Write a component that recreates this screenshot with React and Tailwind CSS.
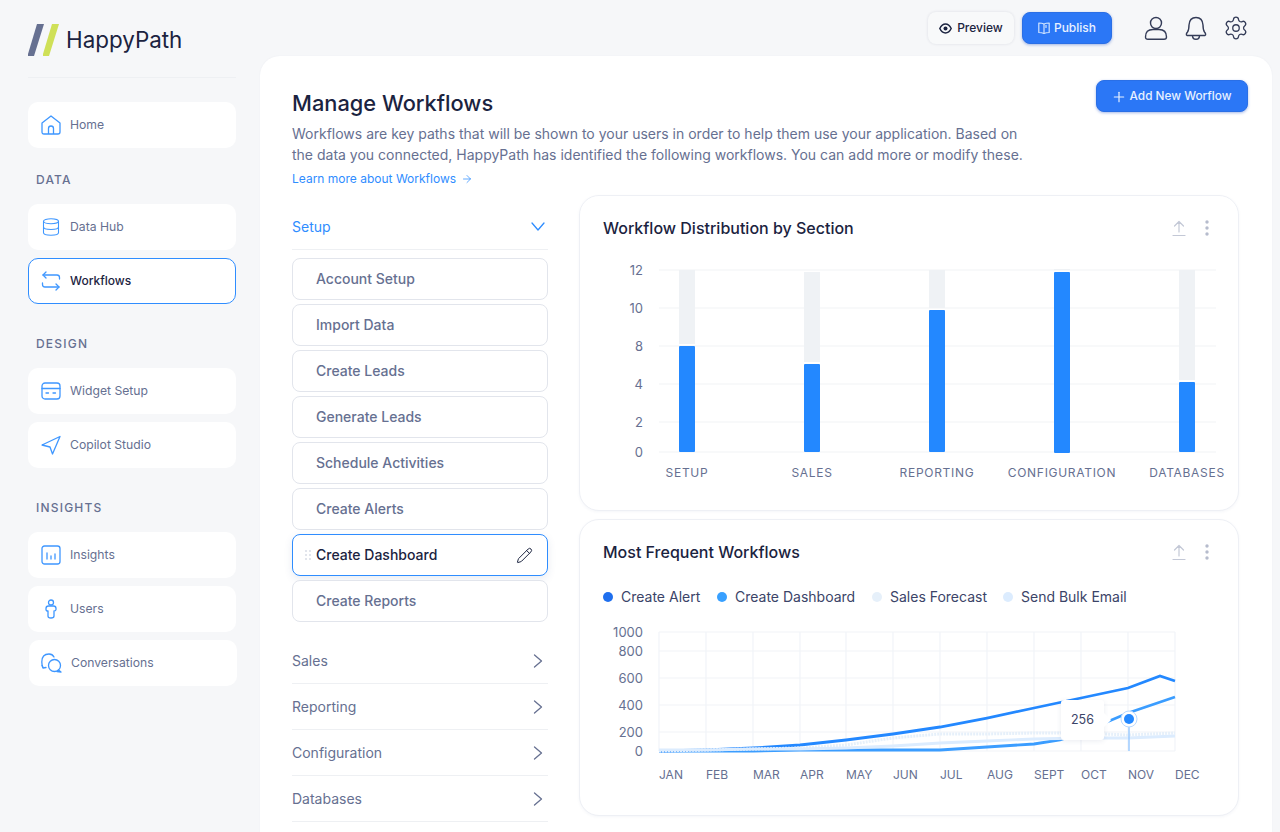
import React from 'react';
import { ArrowRight, Database, Pencil, Plus, Settings } from 'lucide-react';

const HomeIcon = () => (
  <svg width="20" height="20" viewBox="0 0 20 20" fill="none" stroke="#3f97ff" strokeWidth="1.3" strokeLinejoin="round">
    <path d="M1 8 L10 1 L19 8 V17 Q19 19 17 19 H3 Q1 19 1 17 Z" />
    <path d="M7.5 19 V13.5 Q7.5 11 10 11 Q12.5 11 12.5 13.5 V19" />
  </svg>
);

const FlowIcon = () => (
  <svg width="20" height="20" viewBox="0 0 20 20" fill="none" stroke="#3f97ff" strokeWidth="1.3" strokeLinecap="round" strokeLinejoin="round">
    <path d="M18.5 8 V6.5 Q18.5 4 16 4 H2" />
    <path d="M5 1 L2 4 L5 7" />
    <path d="M1.5 12 V13.5 Q1.5 16 4 16 H18" />
    <path d="M15 13 L18 16 L15 19" />
  </svg>
);

const CardIcon = () => (
  <svg width="20" height="18" viewBox="0 0 20 18" fill="none" stroke="#3f97ff" strokeWidth="1.3" strokeLinecap="round">
    <rect x="1" y="1" width="18" height="16" rx="3" />
    <path d="M1 6.5 H19" />
    <path d="M5 11 H7.5 M12 11 H14.5" />
  </svg>
);

const SendIcon = () => (
  <svg width="20" height="20" viewBox="0 0 20 20" fill="none" stroke="#3f97ff" strokeWidth="1.3" strokeLinejoin="round">
    <path d="M1 10 L19 1.5 L11.5 19 L9 12 Z" />
  </svg>
);

const ChartIcon = () => (
  <svg width="20" height="20" viewBox="0 0 20 20" fill="none" stroke="#3f97ff" strokeWidth="1.3" strokeLinecap="round">
    <rect x="1" y="1" width="18" height="18" rx="2.5" />
    <path d="M6 8 V14 M10 11 V14 M14 9 V14" />
  </svg>
);

const PersonIcon = () => (
  <svg width="12" height="20" viewBox="0 0 12 20" fill="none" stroke="#3f97ff" strokeWidth="1.3" strokeLinejoin="round">
    <circle cx="6" cy="3.5" r="2.5" />
    <path d="M3.5 7 H8.5 Q11 7 11 9.5 V10.5 Q11 12 9 12 V17 Q9 19 6 19 Q3 19 3 17 V12 Q1 12 1 10.5 V9.5 Q1 7 3.5 7 Z" />
  </svg>
);

const ChatIcon = () => (
  <svg width="21" height="20" viewBox="0 0 21 20" fill="none" stroke="#3f97ff" strokeWidth="1.3" strokeLinecap="round" strokeLinejoin="round">
    <path d="M2 14.5 Q0.8 12.5 0.8 9 Q0.8 1 8 1 Q11.5 1 13 4" />
    <path d="M1 12.5 L2 15 L5 14.5" />
    <circle cx="13.5" cy="12.5" r="6" />
    <path d="M17.5 17 L20 19 L16 18.5" />
  </svg>
);

const UserIcon = () => (
  <svg width="24" height="24" viewBox="0 0 24 24" fill="none" stroke="#343c58" strokeWidth="1.4">
    <circle cx="12" cy="7" r="5.5" />
    <path d="M1.5 21 Q1.5 13.5 9 13.5 H15 Q22.5 13.5 22.5 21 Q22.5 23.3 20 23.3 H4 Q1.5 23.3 1.5 21 Z" />
  </svg>
);

const BellIcon = () => (
  <svg width="24" height="24" viewBox="0 0 24 24" fill="none" stroke="#343c58" strokeWidth="1.4" strokeLinejoin="round">
    <path d="M12 1.5 Q5.5 1.5 5 9 Q5 14 3.5 16 Q1.5 18.5 3 19.5 H21 Q22.5 18.5 20.5 16 Q19 14 19 9 Q18.5 1.5 12 1.5 Z" />
    <path d="M8.5 19.5 Q8.5 23.3 12 23.3 Q15.5 23.3 15.5 19.5" />
  </svg>
);

const EyeIcon = () => (
  <svg width="13" height="11" viewBox="0 0 13 11" fill="none" stroke="#1b2340" strokeWidth="1.5">
    <path d="M0.8 5.5 Q3 1 6.5 1 Q10 1 12.2 5.5 Q10 10 6.5 10 Q3 10 0.8 5.5 Z" />
    <circle cx="6.5" cy="5.5" r="2" fill="#1b2340" stroke="none" />
  </svg>
);

const BookIcon = () => (
  <svg width="12" height="12" viewBox="0 0 12 12" fill="none" stroke="#cfe3ff" strokeWidth="1.2" strokeLinejoin="round">
    <path d="M6 2 Q4 1 0.8 1 V10.5 Q4 10.5 6 11.5 Q8 10.5 11.2 10.5 V1 Q8 1 6 2 Z" />
    <path d="M6 2 V11.5" />
    <path d="M8 3 V6" />
  </svg>
);

const UploadIcon = () => (
  <svg width="14" height="17" viewBox="0 0 14 17" fill="none" stroke="#c3c8d6" strokeWidth="1.2" strokeLinecap="round" strokeLinejoin="round">
    <path d="M7 12 V1.5 M2.5 6 L7 1.5 L11.5 6" />
    <path d="M1 15.5 H13" />
  </svg>
);

const Dots = () => (
  <svg width="4" height="16" viewBox="0 0 4 16" fill="#b6bccd">
    <circle cx="2" cy="2" r="1.7" />
    <circle cx="2" cy="8" r="1.7" />
    <circle cx="2" cy="14" r="1.7" />
  </svg>
);

const Grip = () => (
  <svg width="6" height="10" viewBox="0 0 6 10" fill="#e2e5ec">
    {[0, 4, 8].map((y) => (
      <g key={y}>
        <rect x="0" y={y} width="2" height="2" />
        <rect x="4" y={y} width="2" height="2" />
      </g>
    ))}
  </svg>
);

const ChevronOpen = () => (
  <svg width="14" height="9" viewBox="0 0 14 9" fill="none" stroke="#2f8dff" strokeWidth="1.3" strokeLinecap="round" strokeLinejoin="round">
    <path d="M1 1 L7 8 L13 1" />
  </svg>
);

const ChevronClosed = () => (
  <svg width="10" height="14" viewBox="0 0 10 14" fill="none" stroke="#667091" strokeWidth="1.3" strokeLinecap="round" strokeLinejoin="round">
    <path d="M1.5 1 L8.5 7 L1.5 13" />
  </svg>
);

const NavItem = ({ icon, label, active, className = '' }) => (
  <div
    className={`flex h-[46px] w-[208px] items-center rounded-[10px] bg-white ${
      active ? 'border border-[#2f8dff]' : ''
    } ${className}`}
  >
    <div className={`flex shrink-0 justify-center pl-[3px] ${active ? 'w-[41px]' : 'w-[42px]'}`}>{icon}</div>
    <span className={active ? 'text-xs font-medium text-[#1b2340]' : 'text-[12.2px] text-[#667091]'}>{label}</span>
  </div>
);

const NavHeading = ({ children, className = '' }) => (
  <div className={`pl-2 text-xs leading-4 font-medium tracking-[0.1em] text-[#667091] ${className}`}>{children}</div>
);

const Sidebar = () => (
  <aside className="w-[260px] shrink-0 pl-7">
    <div className="flex h-[78px] w-[208px] items-start border-b border-[#eef0f3] pt-6">
      <svg width="31" height="32" viewBox="0 0 31 32">
        <polygon points="6,32 0,32 0,30 9,0 16,0" fill="#667091" />
        <polygon points="21,32 15,32 15,30 24,0 31,0" fill="#cfe058" />
      </svg>
      <span className="ml-[7px] text-[22.4px] leading-8 text-[#1b2340]">HappyPath</span>
    </div>
    <NavItem className="mt-6" icon={<HomeIcon />} label="Home" />
    <NavHeading className="mt-6">DATA</NavHeading>
    <NavItem className="mt-4" icon={<Database size={20} color="#3f97ff" strokeWidth={1.3} />} label="Data Hub" />
    <NavItem className="mt-2" icon={<FlowIcon />} label="Workflows" active />
    <NavHeading className="mt-8">DESIGN</NavHeading>
    <NavItem className="mt-4" icon={<CardIcon />} label="Widget Setup" />
    <NavItem className="mt-2" icon={<SendIcon />} label="Copilot Studio" />
    <NavHeading className="mt-8">INSIGHTS</NavHeading>
    <NavItem className="mt-4" icon={<ChartIcon />} label="Insights" />
    <NavItem className="mt-2" icon={<PersonIcon />} label="Users" />
    <NavItem className="mt-2 translate-x-px" icon={<ChatIcon />} label="Conversations" />
  </aside>
);

const TopBar = () => (
  <div className="flex h-14 items-start justify-end pt-3 pr-[31px]">
    <button className="flex h-8 w-[86px] items-center justify-center gap-[5px] rounded-lg bg-[#f8f9fa] text-xs font-medium text-[#1b2340] shadow-[0_0_3px_rgba(30,40,80,0.12)]">
      <EyeIcon />
      Preview
    </button>
    <button className="ml-2 flex h-8 w-[90px] items-center justify-center gap-[4px] rounded-lg border border-[#2a6fe6] bg-[#2b77f6] text-xs font-medium text-[#e8f1ff] shadow-[0_1px_3px_rgba(30,80,200,0.4)]">
      <BookIcon />
      Publish
    </button>
    <div className="ml-8 flex h-8 items-center">
      <UserIcon />
      <div className="ml-4">
        <BellIcon />
      </div>
      <Settings size={26} color="#343c58" strokeWidth={1.2} className="ml-[15px]" />
    </div>
  </div>
);

const SectionRow = ({ label, open }) => (
  <div className="flex h-[46px] items-center justify-between border-b border-[#eef0f3]">
    <span className={`text-sm ${open ? 'text-[#2f8dff]' : 'text-[#667091]'}`}>{label}</span>
    <div className="mr-[3px] flex w-[14px] justify-center">{open ? <ChevronOpen /> : <ChevronClosed />}</div>
  </div>
);

const WorkflowItem = ({ label, active }) => (
  <div
    className={`flex h-[42px] items-center rounded-lg border bg-white ${
      active
        ? 'border-[#2f8dff] text-[#1b2340] shadow-[0_3px_8px_rgba(40,70,130,0.10)]'
        : 'border-[#e2e5ec] text-[#667091]'
    }`}
  >
    <div className="flex w-[23px] shrink-0 justify-end pr-[5px]">{active && <Grip />}</div>
    <span className="flex-1 text-sm font-medium">{label}</span>
    {active && <Pencil size={17} strokeWidth={1.4} className="mr-[14px]" />}
  </div>
);

const WorkflowList = () => (
  <div className="w-[256px] shrink-0 pt-[9px]">
    <SectionRow label="Setup" open />
    <div className="mt-2 flex flex-col gap-1">
      {['Account Setup', 'Import Data', 'Create Leads', 'Generate Leads', 'Schedule Activities', 'Create Alerts'].map(
        (name) => (
          <WorkflowItem key={name} label={name} />
        )
      )}
      <WorkflowItem label="Create Dashboard" active />
      <WorkflowItem label="Create Reports" />
    </div>
    <div className="mt-[16px]">
      {['Sales', 'Reporting', 'Configuration', 'Databases'].map((name) => (
        <SectionRow key={name} label={name} />
      ))}
    </div>
  </div>
);

const CardHeader = ({ title }) => (
  <div className="flex h-[22px] items-center justify-between pr-[29px] pl-[23px]">
    <h2 className="text-base font-medium text-[#1b2340]">{title}</h2>
    <div className="flex items-center gap-[19px]">
      <UploadIcon />
      <Dots />
    </div>
  </div>
);

const barRows = [
  { label: '12', y: 270 },
  { label: '10', y: 308 },
  { label: '8', y: 346 },
  { label: '4', y: 384 },
  { label: '2', y: 422 },
  { label: '0', y: 452 },
];

const bars = [
  { name: 'SETUP', x: 679, trackTop: 270, top: 346, bottom: 452 },
  { name: 'SALES', x: 804, trackTop: 272, top: 364, bottom: 452 },
  { name: 'REPORTING', x: 929, trackTop: 270, top: 310, bottom: 452 },
  { name: 'CONFIGURATION', x: 1054, trackTop: 269, top: 272, bottom: 453 },
  { name: 'DATABASES', x: 1179, trackTop: 270, top: 382, bottom: 452 },
];

const BarChart = () => (
  <svg width="658" height="236" viewBox="580 254 658 236" className="mt-[15px] block">
    {barRows.map((row) => (
      <g key={row.label}>
        <line x1="659" x2="1216" y1={row.y} y2={row.y} stroke="#f1f3f6" strokeWidth="1.2" />
        <text x="643" y={row.y + 4.5} textAnchor="end" fontSize="13" fill="#667091">
          {row.label}
        </text>
      </g>
    ))}
    {bars.map((bar) => (
      <g key={bar.name}>
        <rect x={bar.x} y={bar.trackTop} width="16" height={bar.top - bar.trackTop - 2} fill="#eff2f5" />
        <rect x={bar.x} y={bar.top} width="16" height={bar.bottom - bar.top} rx="1" fill="#2388ff" />
        <text x={bar.x + 8} y="477" textAnchor="middle" fontSize="12" letterSpacing="0.7" fill="#667091">
          {bar.name}
        </text>
      </g>
    ))}
  </svg>
);

const gridX = [659, 706, 753, 800, 846, 893, 940, 987, 1034, 1081, 1128, 1175];
const lineRows = [
  { label: '1000', y: 632 },
  { label: '800', y: 651 },
  { label: '600', y: 678 },
  { label: '400', y: 705 },
  { label: '200', y: 732 },
  { label: '0', y: 751 },
];
const months = ['JAN', 'FEB', 'MAR', 'APR', 'MAY', 'JUN', 'JUL', 'AUG', 'SEPT', 'OCT', 'NOV', 'DEC'];

const legend = [
  { name: 'Create Alert', dot: 'bg-[#1f6fee]', width: 'w-[114px]' },
  { name: 'Create Dashboard', dot: 'bg-[#38a0ff]', width: 'w-[155px]' },
  { name: 'Sales Forecast', dot: 'bg-[#e6f0fa]', width: 'w-[131px]' },
  { name: 'Send Bulk Email', dot: 'bg-[#dcecfe]', width: 'w-auto' },
];

const Legend = () => (
  <div className="mt-[24px] flex h-5 pl-[23px]">
    {legend.map((item) => (
      <div key={item.name} className={`flex shrink-0 items-center gap-2 ${item.width}`}>
        <span className={`h-[10px] w-[10px] rounded-full ${item.dot}`} />
        <span className="text-sm text-[#3b4468]">{item.name}</span>
      </div>
    ))}
  </div>
);

const LineChart = () => (
  <div className="relative mt-[15px]">
    <svg width="658" height="165" viewBox="580 622 658 165" className="block">
      {lineRows.map((row) => (
        <g key={row.label}>
          <line x1="659" x2="1175" y1={row.y} y2={row.y} stroke="#f1f3f8" strokeWidth="1.2" />
          <text x="643" y={row.y + 4.5} textAnchor="end" fontSize="13" fill="#667091">
            {row.label}
          </text>
        </g>
      ))}
      {gridX.map((x, i) => (
        <g key={x}>
          <line x1={x} x2={x} y1="632" y2="751" stroke="#f1f3f8" strokeWidth="1.2" />
          <text x={x} y="779" fontSize="12" fill="#667091">
            {months[i]}
          </text>
        </g>
      ))}
      <polyline
        points="659,751 706,751 753,751 800,750 846,750 893,750 940,750 987,747 1034,744 1060,740 1081,733 1128,713 1175,697"
        fill="none"
        stroke="#3b9dff"
        strokeWidth="2.8"
      />
      <polyline
        points="659,751 706,750 753,748 800,745 846,740 893,734 940,727 987,718 1034,708 1081,698 1128,688 1160,676 1175,681"
        fill="none"
        stroke="#2388ff"
        strokeWidth="2.8"
      />
      <polyline
        points="659,751 706,750 753,749 800,748 846,745 893,738 940,734 987,734 1034,733 1081,733 1128,735 1175,733"
        fill="none"
        stroke="#e6f0fa"
        strokeWidth="3"
        strokeDasharray="2 1"
      />
      <polyline
        points="659,750 706,750 753,749 800,749 846,748 893,746 940,743 987,741 1034,739 1081,738 1128,738 1175,736"
        fill="none"
        stroke="#dcecfe"
        strokeWidth="2.8"
      />
      <line x1="1129" x2="1129" y1="727" y2="751" stroke="#9ccbff" strokeWidth="1.5" />
      <circle cx="1129" cy="719" r="8" fill="white" stroke="#b8d9ff" strokeWidth="1" />
      <circle cx="1129" cy="719" r="5" fill="#2388ff" />
    </svg>
    <div className="absolute top-[78px] left-[481px] flex h-10 w-[43px] items-center justify-center rounded-[3px] bg-white text-[12.5px] text-[#3b4468] shadow-[0_1px_5px_rgba(60,80,130,0.10)]">
      256
      <span className="absolute top-[15px] -right-[5px] h-[10px] w-[10px] rotate-45 bg-white" />
    </div>
  </div>
);

const ChartCard = ({ children, className = '' }) => (
  <section className={`w-[660px] rounded-[20px] border border-[#eef0f5] bg-white shadow-[0_1px_3px_rgba(60,80,130,0.05)] ${className}`}>
    {children}
  </section>
);

export default function App() {
  return (
    <div className="flex h-[832px] overflow-hidden bg-[#f6f7f9] font-['Inter',sans-serif]">
      <Sidebar />
      <div className="min-w-0 flex-1">
        <TopBar />
        <main className="mr-2 h-[776px] overflow-hidden rounded-t-[20px] bg-white pt-6 pr-6 pl-8 shadow-[0_0_2px_rgba(60,80,130,0.06)]">
          <div className="flex items-start justify-between">
            <div className="pt-[7px]">
              <h1 className="text-[21.8px] leading-8 font-medium text-[#1b2340]">Manage Workflows</h1>
              <p className="mt-[4px] w-[740px] text-sm leading-[21px] text-[#667091]">
                Workflows are key paths that will be shown to your users in order to help them use your application.
                Based on the data you connected, HappyPath has identified the following workflows. You can add more or
                modify these.
              </p>
              <a className="mt-[5px] flex items-center gap-[5px] text-xs leading-[18px] text-[#2f8dff]">
                Learn more about Workflows
                <ArrowRight size={12} strokeWidth={1.5} />
              </a>
            </div>
            <button className="flex h-8 w-[152px] items-center justify-center gap-[3px] rounded-lg border border-[#2a6fe6] bg-[#2b77f6] pt-px pr-[2px] text-[11.8px] font-medium text-[#e8f1ff] shadow-[0_1px_3px_rgba(30,80,200,0.4)]">
              <Plus size={16} strokeWidth={1.8} />
              Add New Worflow
            </button>
          </div>
          <div className="mt-[7px] flex gap-[31px]">
            <WorkflowList />
            <div className="flex flex-col gap-2">
              <ChartCard className="h-[316px] pt-[21px]">
                <CardHeader title="Workflow Distribution by Section" />
                <BarChart />
              </ChartCard>
              <ChartCard className="h-[297px] pt-[21px]">
                <CardHeader title="Most Frequent Workflows" />
                <Legend />
                <LineChart />
              </ChartCard>
            </div>
          </div>
        </main>
      </div>
    </div>
  );
}
